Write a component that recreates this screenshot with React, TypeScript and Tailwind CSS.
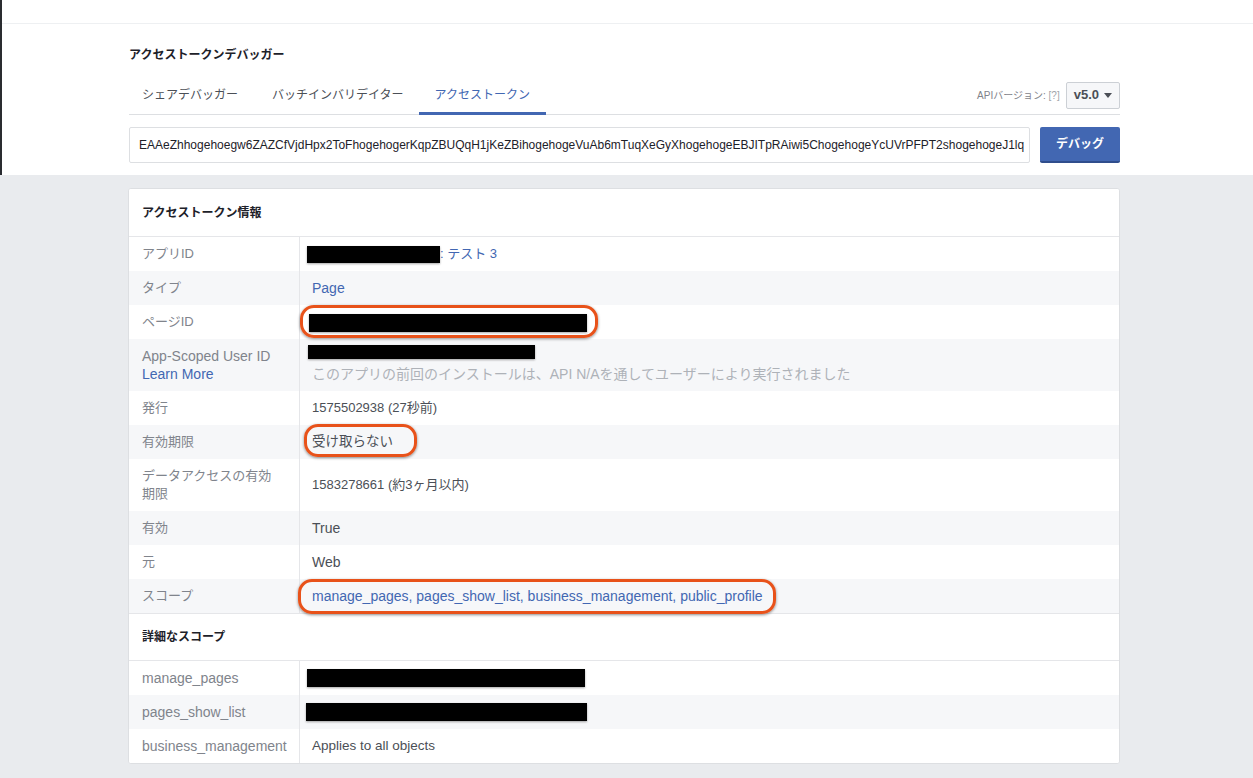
import React from 'react';

type Row = {
  label: React.ReactNode;
  value: React.ReactNode;
  tall?: boolean;
};

const Redact = ({ w, h = 17, className = '' }: { w: number; h?: number; className?: string }) => (
  <span
    className={`inline-block bg-black align-middle shadow-[0_1px_2px_rgba(0,0,0,0.35)] ${className}`}
    style={{ width: w, height: h }}
  />
);

// 手書き風のオレンジ枠（スクリーンショット上の注釈）
const Marked = ({ children, inset }: { children: React.ReactNode; inset: string }) => (
  <span className="relative inline-block">
    {children}
    <span
      className={`pointer-events-none absolute ${inset} rounded-[14px] border-[3px] border-[#e8521a] shadow-[0_1px_3px_rgba(0,0,0,0.45)]`}
    />
  </span>
);

const link = 'text-[#4267b2]';
const latin = 'text-[14px]';

const infoRows: Row[] = [
  {
    label: 'アプリID',
    value: (
      <span className="flex items-center">
        <Redact w={133} className="-ml-[5px]" />
        <span className={link}>: テスト 3</span>
      </span>
    ),
  },
  { label: 'タイプ', value: <span className={`${link} ${latin}`}>Page</span> },
  {
    label: 'ページID',
    value: (
      <Marked inset="-left-[12px] -right-[11px] -top-[7px] -bottom-[6px]">
        <Redact w={278} h={18} className="-ml-[3px] block" />
      </Marked>
    ),
  },
  {
    label: (
      <span className={`flex flex-col leading-[18px] ${latin}`}>
        <span>App-Scoped User ID</span>
        <span className={link}>Learn More</span>
      </span>
    ),
    value: (
      <span className="flex flex-col">
        <Redact w={227} h={14} className="-ml-[4px]" />
        <span className="mt-[5px] text-[14px] text-[#aeb2b8]">
          このアプリの前回のインストールは、API N/Aを通してユーザーにより実行されました
        </span>
      </span>
    ),
    tall: true,
  },
  { label: '発行', value: '1575502938 (27秒前)' },
  {
    label: '有効期限',
    value: (
      <Marked inset="-left-[8px] -right-[24px] -top-[8px] -bottom-[5px]">
        <span className="text-[13.5px]">受け取らない</span>
      </Marked>
    ),
  },
  {
    label: <span className="block w-[136px] leading-[18px]">データアクセスの有効期限</span>,
    value: '1583278661 (約3ヶ月以内)',
    tall: true,
  },
  { label: '有効', value: <span className={latin}>True</span> },
  { label: '元', value: <span className={latin}>Web</span> },
  {
    label: 'スコープ',
    value: (
      <Marked inset="-left-[14px] -right-[13px] -top-[7px] -bottom-[7px]">
        <span className={`${link} ${latin}`}>manage_pages, pages_show_list, business_management, public_profile</span>
      </Marked>
    ),
  },
];

const scopeRows: Row[] = [
  { label: <span className={latin}>manage_pages</span>, value: <Redact w={278} h={18} className="-ml-[5px]" /> },
  { label: <span className={latin}>pages_show_list</span>, value: <Redact w={281} h={18} className="-ml-[6px]" /> },
  {
    label: <span className={latin}>business_management</span>,
    value: <span className="text-[13.5px]">Applies to all objects</span>,
  },
];

const TableRows = ({ rows }: { rows: Row[] }) => (
  <div>
    {rows.map((row, i) => (
      <div
        key={i}
        className={`flex text-[13px] ${row.tall ? 'h-[52px]' : 'h-[34px]'} ${i % 2 === 1 ? 'bg-[#f6f7f9]' : 'bg-white'}`}
      >
        <div className="flex w-[171px] shrink-0 items-center border-r border-[#e5e6e9] pl-[13px] text-[#80848c]">
          {row.label}
        </div>
        <div className="flex flex-1 items-center pl-[12px] text-[#4b4f56]">{row.value}</div>
      </div>
    ))}
  </div>
);

const SectionHeader = ({ title, top = false }: { title: string; top?: boolean }) => (
  <div
    className={`flex h-[48px] items-center border-b border-[#e5e6e9] bg-white pl-[13px] text-[12px] font-bold text-[#1d2129] ${
      top ? 'border-t' : ''
    }`}
  >
    {title}
  </div>
);

export default function App() {
  return (
    <div className="min-h-screen bg-[#e9ebee] font-['Liberation_Sans','Noto_Sans_CJK_JP',sans-serif] text-[#1d2129]">
      {/* 上部の白い領域 */}
      <div className="border-l-2 border-[#2a2c30] bg-white">
        <div className="h-[24px] border-b border-[#eef0f2]" />
        <div className="pl-[125px] pr-[133px]">
          <h1 className="mt-[23px] pl-[2px] text-[12px] font-bold leading-[16px]">アクセストークンデバッガー</h1>

          <div className="mt-[13px] ml-[2px] flex h-[39px] items-center justify-between border-b border-[#dddfe2]">
            <div className="-ml-[2px] flex h-full items-end gap-[4px] text-[12px] text-[#4b4f56]">
              <span className="flex h-full items-center px-[15px]">シェアデバッガー</span>
              <span className="flex h-full items-center px-[15px]">バッチインバリデイター</span>
              <span className="-mb-px -ml-[4px] flex h-[40px] items-center border-b-[3px] border-[#4267b2] px-[16px] pt-[2px] text-[#4267b2]">
                アクセストークン
              </span>
            </div>
            <div className="flex items-center gap-[6px]">
              <span className="text-[10px] text-[#7f838a]">
                APIバージョン: <span className="text-[#a0a4aa]">[?]</span>
              </span>
              <button className="flex h-[27px] items-center gap-[5px] rounded-[2px] border border-[#ccd0d5] bg-[#f6f7f9] px-[7px] text-[13px] font-bold text-[#4b4f56]">
                v5.0
                <svg width="8" height="5" viewBox="0 0 8 5">
                  <path d="M0 0h8L4 5z" fill="#4b4f56" />
                </svg>
              </button>
            </div>
          </div>

          <div className="flex gap-[10px] pb-[12px] pl-[2px] pt-[12px]">
            <div className="flex h-[36px] flex-1 items-center overflow-hidden whitespace-nowrap rounded-[2px] border border-[#dddfe2] bg-white px-[9px] text-[12px] text-[#1d2129]">
              EAAeZhhogehoegw6ZAZCfVjdHpx2ToFhogehogerKqpZBUQqH1jKeZBihogehogeVuAb6mTuqXeGyXhogehogeEBJITpRAiwi5ChogehogeYcUVrPFPT2shogehogeJ1lq
            </div>
            <button className="h-[36px] w-[80px] rounded-[2px] border-b-2 border-[#2f4d8c] bg-[#4267b2] text-[12px] font-bold text-white">
              デバッグ
            </button>
          </div>
        </div>
      </div>

      {/* アクセストークン情報カード */}
      <div className="pb-[15px] pl-[128px] pr-[133px] pt-[13px]">
        <div className="overflow-hidden rounded-[3px] border border-[#dddfe2] bg-white">
          <SectionHeader title="アクセストークン情報" />
          <TableRows rows={infoRows} />
          <SectionHeader title="詳細なスコープ" top />
          <TableRows rows={scopeRows} />
        </div>
      </div>
    </div>
  );
}
